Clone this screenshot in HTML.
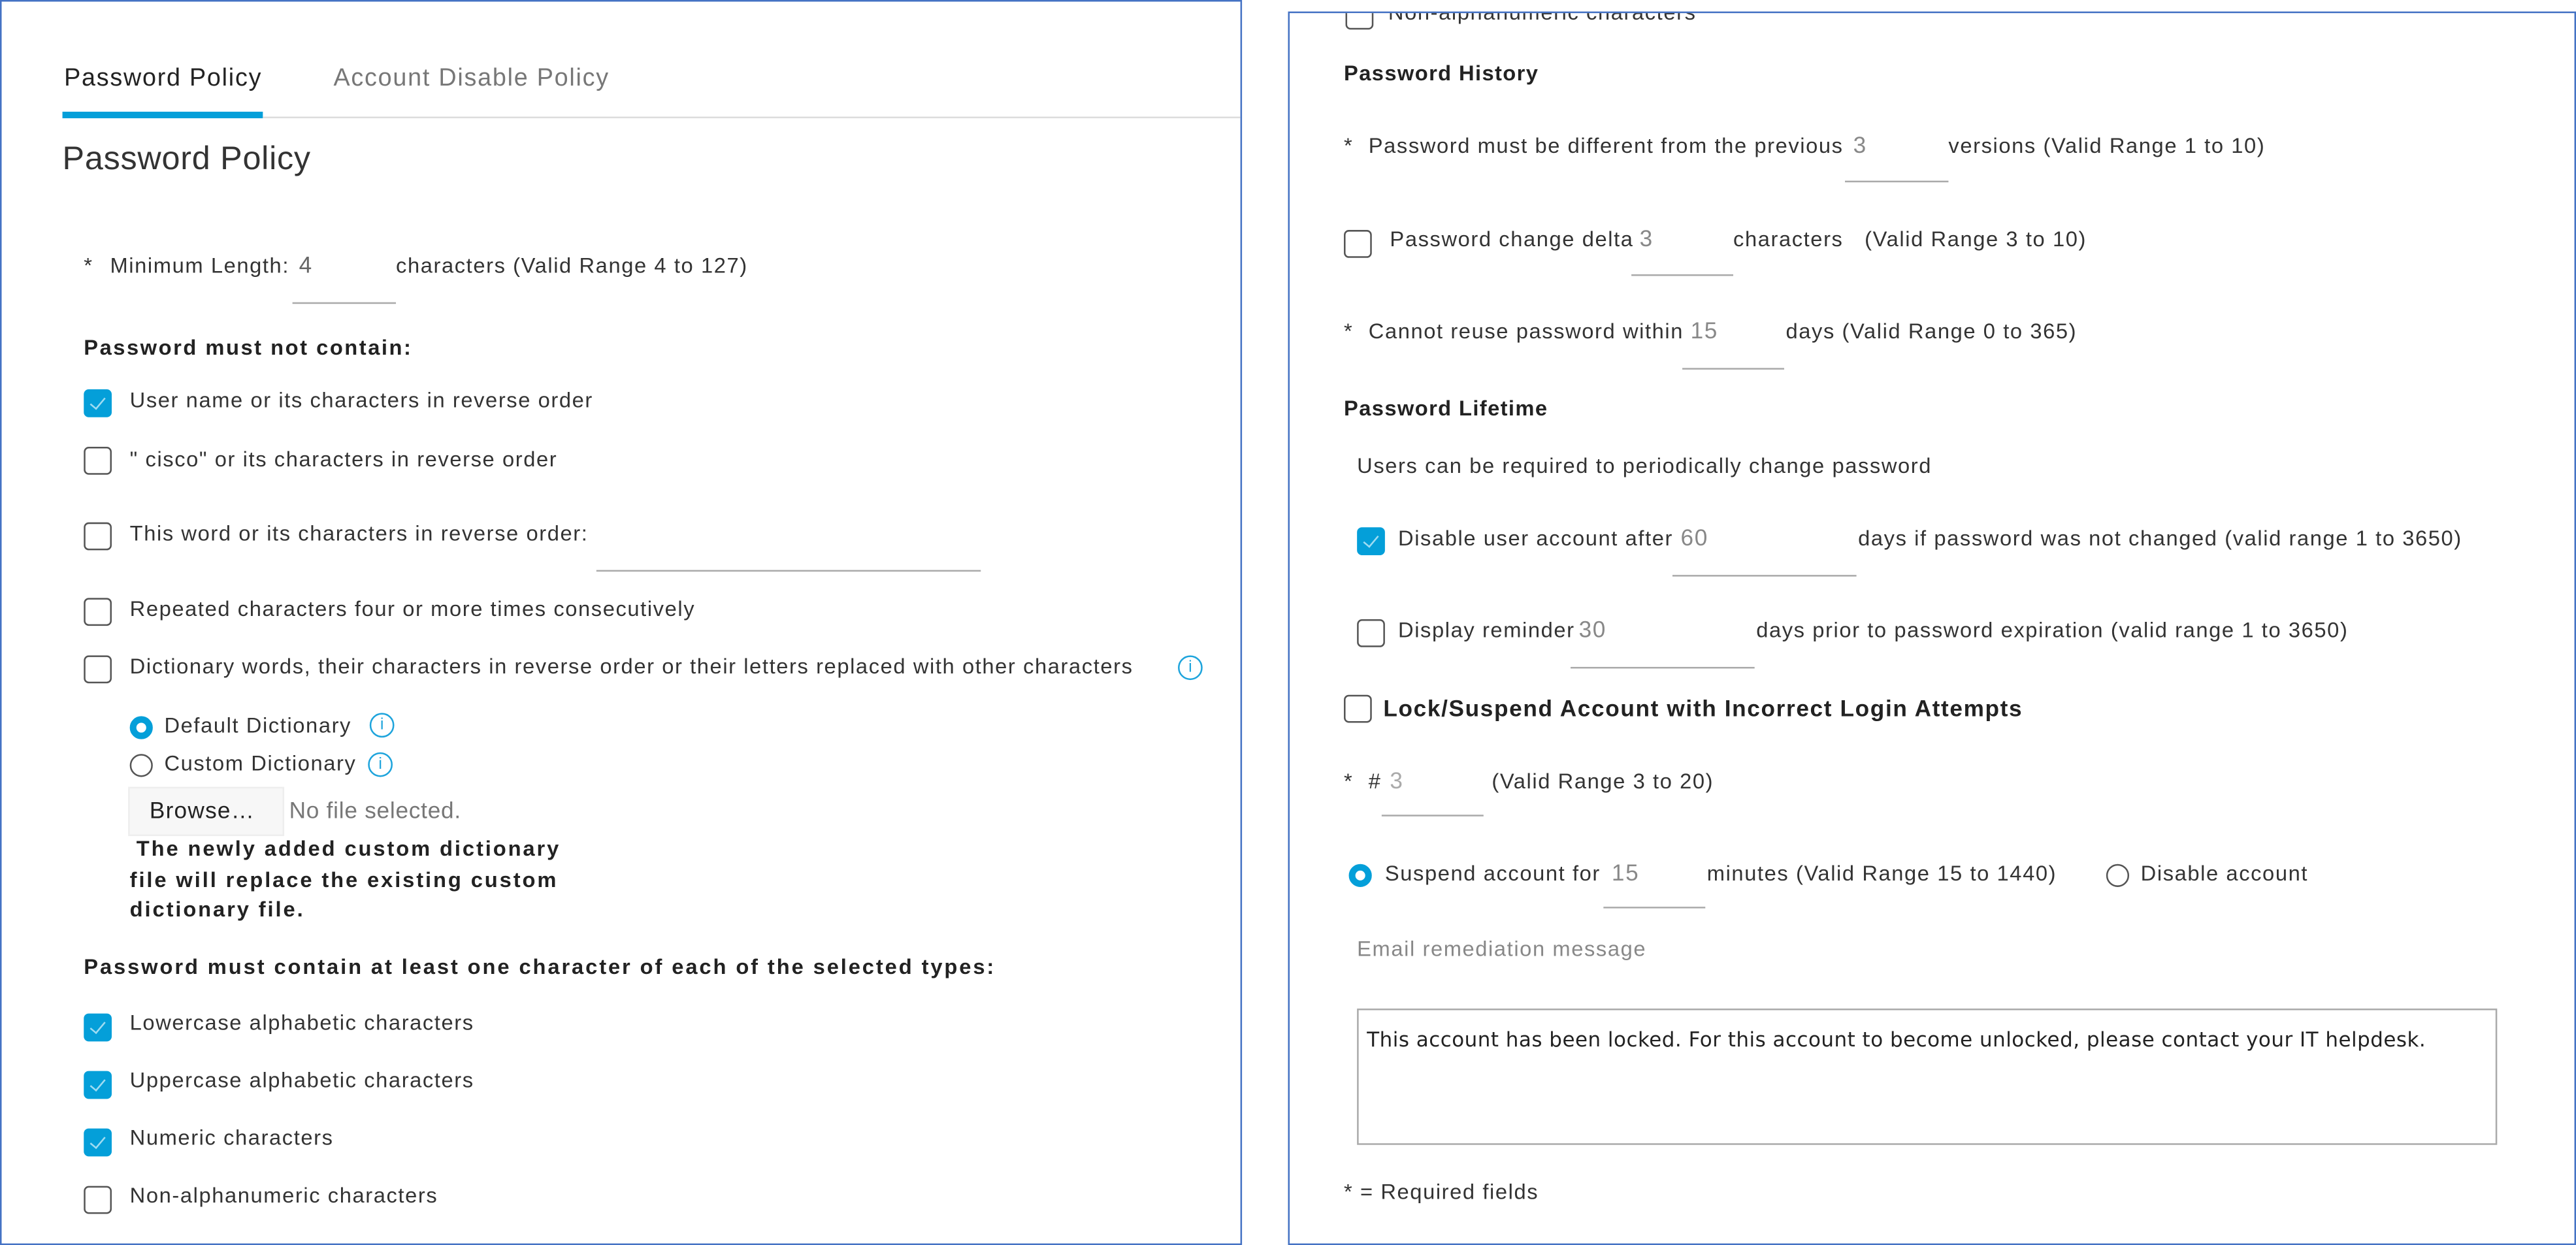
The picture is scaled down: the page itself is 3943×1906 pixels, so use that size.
<!DOCTYPE html>
<html><head><meta charset="utf-8"><style>
html,body{margin:0;padding:0;background:#fff;width:3943px;height:1905px;overflow:hidden}
#w{position:absolute;left:0;top:0;width:1568px;height:758px;transform:scale(2.5147);transform-origin:0 0;font-family:"Liberation Sans",sans-serif;color:#333}
.p{position:absolute;border:1px solid #4472c4;box-sizing:border-box;overflow:hidden;background:#fff}
.t{position:absolute;white-space:nowrap;font-size:13px;line-height:16px;height:16px;margin-top:-8px;letter-spacing:.63px}
.b{font-weight:bold;color:#222;letter-spacing:1.15px}
.g{color:#888}
.u{position:absolute;height:1px;background:#aaa}
.cb{position:absolute;width:17px;height:17px;margin-top:-9px;border:1.3px solid #555;border-radius:3px;box-sizing:border-box;background:#fff}
.cb.c{background:#049fd9;border-color:#049fd9}
.cb.c:after{content:"";position:absolute;left:5px;top:2px;width:4px;height:8px;border:solid #9fdcf2;border-width:0 1.3px 1.3px 0;transform:rotate(40deg)}
.r{position:absolute;width:14px;height:14px;margin-top:-7px;border-radius:50%;box-sizing:border-box;border:1.3px solid #555;background:#fff}
.r.c{border:4.5px solid #049fd9}
.i{position:absolute;width:15px;height:15px;margin-top:-8px;border-radius:50%;border:1.2px solid #1ea4dc;box-sizing:border-box;color:#1ea4dc;font-size:10px;line-height:13px;text-align:center}
</style></head><body><div id="w">
<div class="p" style="left:0;top:0;width:756px;height:758px">
 <div class="t" style="left:38px;top:47px;font-size:15px;color:#222;letter-spacing:.7px">Password Policy</div>
 <div class="t" style="left:202px;top:47px;font-size:15px;color:#777;letter-spacing:.7px">Account Disable Policy</div>
 <div style="position:absolute;left:37px;top:67px;width:122px;height:4px;background:#049fd9"></div>
 <div style="position:absolute;left:159px;top:70px;width:600px;height:1px;background:#ddd"></div>
 <div class="t" style="left:37px;top:96px;font-size:20px;line-height:24px;height:24px;margin-top:-12px;color:#333;letter-spacing:.3px">Password Policy</div>

 <div class="t" style="left:50px;top:161px">*</div>
 <div class="t" style="left:66px;top:161px">Minimum Length:</div>
 <div class="t g" style="left:181px;top:160px;font-size:14px;color:#666">4</div>
 <div class="u" style="left:177px;top:183px;width:63px"></div>
 <div class="t" style="left:240px;top:161px">characters (Valid Range 4 to 127)</div>

 <div class="t b" style="left:50px;top:211px;letter-spacing:1px">Password must not contain:</div>
 <div class="cb c" style="left:50px;top:245px"></div><div class="t" style="left:78px;top:243px">User name or its characters in reverse order</div>
 <div class="cb" style="left:50px;top:280px"></div><div class="t" style="left:78px;top:279px">" cisco"  or its characters in reverse order</div>
 <div class="cb" style="left:50px;top:326px"></div><div class="t" style="left:78px;top:324px">This word or its characters in reverse order:</div>
 <div class="u" style="left:362px;top:346px;width:234px"></div>
 <div class="cb" style="left:50px;top:372px"></div><div class="t" style="left:78px;top:370px">Repeated characters four or more times consecutively</div>
 <div class="cb" style="left:50px;top:407px"></div><div class="t" style="left:78px;top:405px">Dictionary words, their characters in reverse order or their letters replaced with other characters</div>
 <div class="i" style="left:716px;top:406px">i</div>
 <div class="r c" style="left:78px;top:442px"></div><div class="t" style="left:99px;top:441px">Default Dictionary</div><div class="i" style="left:224px;top:441px">i</div>
 <div class="r" style="left:78px;top:465px"></div><div class="t" style="left:99px;top:464px">Custom Dictionary</div><div class="i" style="left:223px;top:465px">i</div>
 <div style="position:absolute;left:77px;top:478px;width:93px;height:28px;background:#f7f7f7;border:1px solid #eee"></div>
 <div class="t" style="left:90px;top:492px;font-size:14px;color:#222;letter-spacing:.5px">Browse…</div>
 <div class="t" style="left:175px;top:492px;font-size:14px;color:#777;letter-spacing:.3px">No file selected.</div>
 <div class="t b" style="left:82px;top:516px">The newly added custom dictionary</div>
 <div class="t b" style="left:78px;top:535px">file will replace the existing custom</div>
 <div class="t b" style="left:78px;top:553px">dictionary file.</div>

 <div class="t b" style="left:50px;top:588px">Password must contain at least one character of each of the selected types:</div>
 <div class="cb c" style="left:50px;top:625px"></div><div class="t" style="left:78px;top:622px">Lowercase alphabetic characters</div>
 <div class="cb c" style="left:50px;top:660px"></div><div class="t" style="left:78px;top:657px">Uppercase alphabetic characters</div>
 <div class="cb c" style="left:50px;top:695px"></div><div class="t" style="left:78px;top:692px">Numeric characters</div>
 <div class="cb" style="left:50px;top:730px"></div><div class="t" style="left:78px;top:727px">Non-alphanumeric characters</div>
</div>

<div class="p" style="left:784px;top:7px;width:784px;height:751px">
 <div class="cb" style="left:34px;top:2px"></div><div class="t" style="left:60px;top:0px">Non-alphanumeric characters</div>
 <div class="t b" style="left:33px;top:37px;letter-spacing:.55px">Password History</div>
 <div class="t" style="left:33px;top:81px">*</div>
 <div class="t" style="left:48px;top:81px">Password must be different from the previous</div>
 <div class="t g" style="left:343px;top:80px;font-size:14px">3</div>
 <div class="u" style="left:338px;top:102px;width:63px"></div>
 <div class="t" style="left:401px;top:81px">versions (Valid Range 1 to 10)</div>

 <div class="cb" style="left:33px;top:141px"></div>
 <div class="t" style="left:61px;top:138px">Password change delta</div>
 <div class="t g" style="left:213px;top:137px;font-size:14px">3</div>
 <div class="u" style="left:208px;top:159px;width:62px"></div>
 <div class="t" style="left:270px;top:138px">characters</div>
 <div class="t" style="left:350px;top:138px">(Valid Range 3 to 10)</div>

 <div class="t" style="left:33px;top:194px">*</div>
 <div class="t" style="left:48px;top:194px">Cannot reuse password within</div>
 <div class="t g" style="left:244px;top:193px;font-size:14px">15</div>
 <div class="u" style="left:239px;top:216px;width:62px"></div>
 <div class="t" style="left:302px;top:194px">days (Valid Range 0 to 365)</div>

 <div class="t b" style="left:33px;top:241px;letter-spacing:.55px">Password Lifetime</div>
 <div class="t" style="left:41px;top:276px">Users can be required to periodically change password</div>

 <div class="cb c" style="left:41px;top:322px"></div>
 <div class="t" style="left:66px;top:320px">Disable user account after</div>
 <div class="t g" style="left:238px;top:319px;font-size:14px">60</div>
 <div class="u" style="left:233px;top:342px;width:112px"></div>
 <div class="t" style="left:346px;top:320px">days if password was not changed (valid range 1 to 3650)</div>

 <div class="cb" style="left:41px;top:378px"></div>
 <div class="t" style="left:66px;top:376px">Display reminder</div>
 <div class="t g" style="left:176px;top:375px;font-size:14px">30</div>
 <div class="u" style="left:171px;top:398px;width:112px"></div>
 <div class="t" style="left:284px;top:376px">days prior to password expiration (valid range 1 to 3650)</div>

 <div class="cb" style="left:33px;top:424px"></div>
 <div class="t b" style="left:57px;top:423px;font-size:14px;letter-spacing:.65px">Lock/Suspend Account with Incorrect Login Attempts</div>

 <div class="t" style="left:33px;top:468px">*</div>
 <div class="t" style="left:48px;top:468px">#</div>
 <div class="t g" style="left:61px;top:467px;font-size:14px;color:#aaa">3</div>
 <div class="u" style="left:56px;top:488px;width:62px"></div>
 <div class="t" style="left:123px;top:468px">(Valid Range 3 to 20)</div>

 <div class="r c" style="left:36px;top:525px"></div>
 <div class="t" style="left:58px;top:524px">Suspend account for</div>
 <div class="t g" style="left:196px;top:523px;font-size:14px">15</div>
 <div class="u" style="left:191px;top:544px;width:62px"></div>
 <div class="t" style="left:254px;top:524px">minutes (Valid Range 15 to 1440)</div>
 <div class="r" style="left:497px;top:525px"></div>
 <div class="t" style="left:518px;top:524px">Disable account</div>

 <div class="t" style="left:41px;top:570px;color:#888">Email remediation message</div>
 <div style="position:absolute;left:41px;top:606px;width:694px;height:83px;border:1px solid #aaa;box-sizing:border-box"></div>
 <div class="t" style="left:47px;top:625px;font-family:'DejaVu Sans',sans-serif;font-size:12.3px;color:#222;letter-spacing:.2px">This account has been locked. For this account to become unlocked, please contact your IT helpdesk.</div>
 <div class="t" style="left:33px;top:718px">* = Required fields</div>
</div>
</div></body></html>
